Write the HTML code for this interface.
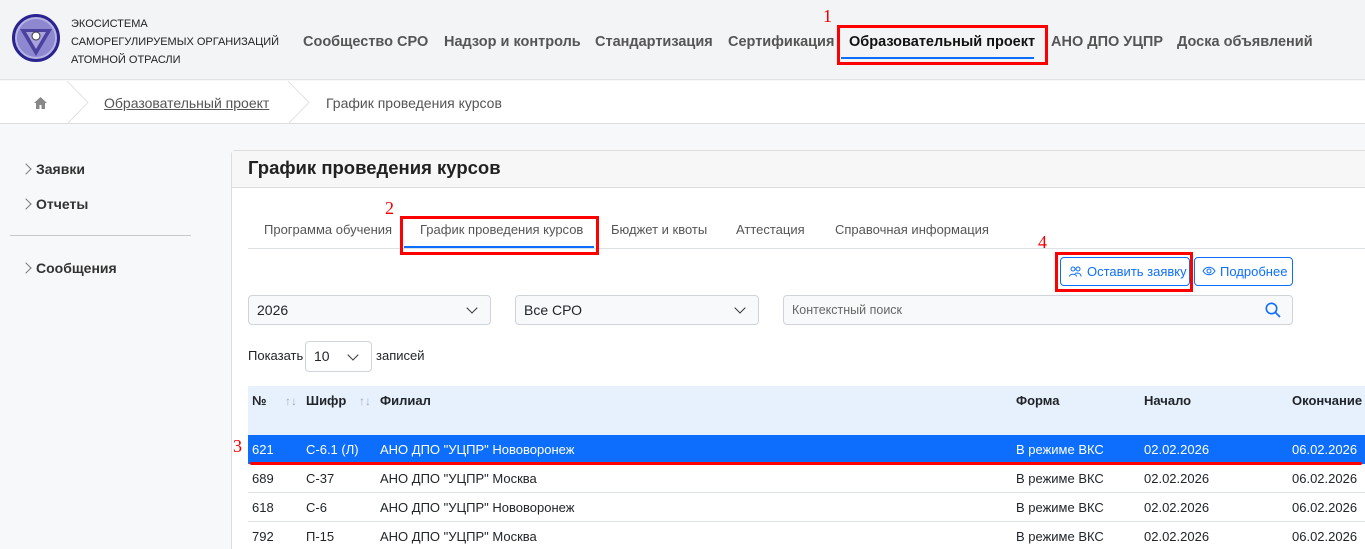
<!DOCTYPE html><html><head><meta charset="utf-8"><style>
*{margin:0;padding:0;box-sizing:border-box}
html,body{width:1365px;height:549px;overflow:hidden}
body{background:#f7f8fa;font-family:"Liberation Sans",Arial,sans-serif;position:relative;color:#212529}
.a{position:absolute;white-space:nowrap}
.nav{font-size:14.5px;font-weight:bold;color:#555;top:34px}
.red{border:3px solid #f00;position:absolute}
.num{position:absolute;color:#e00;font-family:"Liberation Serif",serif;font-size:18px}
.tab{font-size:13px;color:#555;top:222px}
.sel{position:absolute;height:30px;border:1px solid #ced4da;border-radius:4px;background:#f8f9fa;font-size:14px;padding:6px 8px}
.chev{position:absolute;right:14px;top:8px;width:8px;height:8px;border-right:1.5px solid #333;border-bottom:1.5px solid #333;transform:rotate(45deg)}
.row{position:absolute;left:248px;width:1117px;height:29px;font-size:13px;border-bottom:1px solid #dee2e6}
.row span{position:absolute;top:7px}
.side{font-size:14px;font-weight:bold;color:#333;left:36px}
.sc{position:absolute;left:22px;width:8px;height:8px;border-right:1.5px solid #777;border-top:1.5px solid #777;transform:rotate(45deg)}
</style></head><body>
<div class="a" style="left:0;top:0;width:1365px;height:80px;background:#f3f4f6;border-bottom:1px solid #e2e3e5"></div>
<svg class="a" style="left:12px;top:14px" width="48" height="48" viewBox="0 0 48 48"><circle cx="24" cy="24" r="22.5" fill="#b7b4e2" stroke="#2a2390" stroke-width="3"/><circle cx="24" cy="24" r="19" fill="#8d88cf"/><polygon points="8,15 40,15 24,42" fill="#4a429e"/><polygon points="14,18 34,18 24,35" fill="#a8a3de"/><circle cx="24" cy="22" r="4" fill="#fff" stroke="#333"/></svg>
<div class="a" style="left:71px;top:15px;font-size:11px;line-height:18px;color:#222">ЭКОСИСТЕМА<br>САМОРЕГУЛИРУЕМЫХ ОРГАНИЗАЦИЙ<br>АТОМНОЙ ОТРАСЛИ</div>
<div class="a nav" style="left:303px">Сообщество СРО</div>
<div class="a nav" style="left:444px">Надзор и контроль</div>
<div class="a nav" style="left:595px">Стандартизация</div>
<div class="a nav" style="left:728px">Сертификация</div>
<div class="a nav" style="left:849px;color:#111">Образовательный проект</div>
<div class="a" style="left:841px;top:57px;width:193px;height:2px;background:#0d6efd"></div>
<div class="red" style="left:837px;top:25px;width:211px;height:40px"></div>
<div class="num" style="left:823px;top:6px">1</div>
<div class="a nav" style="left:1051px">АНО ДПО УЦПР</div>
<div class="a nav" style="left:1177px">Доска объявлений</div>
<div class="a" style="left:0;top:81px;width:1365px;height:43px;background:#fff;border-bottom:1px solid #ddd"></div>
<svg class="a" style="left:34px;top:97px" width="13" height="12" viewBox="0 0 13 12"><path d="M6.5 0L0 6h2v6h3.5V8h2v4H11V6h2z" fill="#888"/></svg>
<svg class="a" style="left:66px;top:81px" width="24" height="43"><path d="M1 0L22 21.5L1 43" fill="none" stroke="#e3e3e3"/></svg>
<div class="a" style="left:104px;top:95px;font-size:14px;color:#555;text-decoration:underline">Образовательный проект</div>
<svg class="a" style="left:287px;top:81px" width="24" height="43"><path d="M1 0L22 21.5L1 43" fill="none" stroke="#e3e3e3"/></svg>
<div class="a" style="left:326px;top:95px;font-size:14px;color:#555">График проведения курсов</div>
<div class="sc" style="top:165px"></div><div class="a side" style="top:161px">Заявки</div>
<div class="sc" style="top:200px"></div><div class="a side" style="top:196px">Отчеты</div>
<div class="a" style="left:10px;top:235px;width:181px;height:1px;background:#c8c8c8"></div>
<div class="sc" style="top:264px"></div><div class="a side" style="top:260px">Сообщения</div>
<div class="a" style="left:231px;top:150px;width:1140px;height:420px;background:#fff;border:1px solid #ddd;border-radius:4px"></div>
<div class="a" style="left:232px;top:151px;width:1133px;height:37px;background:#f7f7f7;border-bottom:1px solid #ddd"></div>
<div class="a" style="left:248px;top:157px;font-size:18.5px;font-weight:bold;color:#222">График проведения курсов</div>
<div class="a" style="left:248px;top:248px;width:1117px;height:1px;background:#dee2e6"></div>
<div class="a tab" style="left:264px">Программа обучения</div>
<div class="a tab" style="left:420px">График проведения курсов</div>
<div class="a" style="left:404px;top:246px;width:190px;height:2px;background:#0d6efd"></div>
<div class="red" style="left:400px;top:216px;width:199px;height:39px"></div>
<div class="num" style="left:385px;top:198px">2</div>
<div class="a tab" style="left:611px">Бюджет и квоты</div>
<div class="a tab" style="left:736px">Аттестация</div>
<div class="a tab" style="left:835px">Справочная информация</div>
<div class="num" style="left:1038px;top:232px">4</div>
<div class="red" style="left:1055px;top:252px;width:138px;height:40px"></div>
<div class="a" style="left:1060px;top:257px;width:130px;height:29px;border:1px solid #0d6efd;border-radius:4px;color:#0d6efd;font-size:13px;padding:6px 0 0 26px">Оставить заявку</div>
<svg class="a" style="left:1069px;top:266px" width="13" height="11" viewBox="0 0 13 11"><g fill="none" stroke="#0d6efd" stroke-width="1"><circle cx="4" cy="3" r="2"/><circle cx="9" cy="3" r="2"/><path d="M0.5 10.5c0-3 7-3 7 0M6 7.5c2-1 6-.5 6 3"/></g></svg>
<div class="a" style="left:1194px;top:257px;width:99px;height:29px;border:1px solid #0d6efd;border-radius:4px;color:#0d6efd;font-size:13px;padding:6px 0 0 25px">Подробнее</div>
<svg class="a" style="left:1202px;top:266px" width="14" height="10" viewBox="0 0 14 10"><path d="M1 5C4 0 10 0 13 5C10 10 4 10 1 5z" fill="none" stroke="#0d6efd"/><circle cx="7" cy="5" r="2" fill="none" stroke="#0d6efd"/></svg>
<div class="sel" style="left:248px;top:295px;width:243px">2026<div class="chev"></div></div>
<div class="sel" style="left:515px;top:295px;width:244px">Все СРО<div class="chev"></div></div>
<div class="sel" style="left:783px;top:295px;width:510px;font-size:12.5px;color:#666;padding-top:7px">Контекстный поиск</div>
<svg class="a" style="left:1265px;top:302px" width="16" height="16" viewBox="0 0 16 16"><circle cx="6.5" cy="6.5" r="5.2" fill="none" stroke="#0d6efd" stroke-width="1.6"/><path d="M10.5 10.5L15 15" stroke="#0d6efd" stroke-width="1.6"/></svg>
<div class="a" style="left:248px;top:348px;font-size:13px">Показать</div>
<div class="sel" style="left:305px;top:341px;width:67px;height:31px;background:#fff">10<div class="chev" style="right:14px;top:9px"></div></div>
<div class="a" style="left:376px;top:348px;font-size:13px">записей</div>
<div class="a" style="left:248px;top:386px;width:1117px;height:49px;background:#e7f0fd"></div>
<div class="a" style="left:252px;top:393px;font-size:13px;font-weight:bold">№</div>
<div class="a" style="left:285px;top:394px;font-size:12px;color:#aab">↑↓</div>
<div class="a" style="left:306px;top:393px;font-size:13px;font-weight:bold">Шифр</div>
<div class="a" style="left:359px;top:394px;font-size:12px;color:#aab">↑↓</div>
<div class="a" style="left:380px;top:393px;font-size:13px;font-weight:bold">Филиал</div>
<div class="a" style="left:1016px;top:393px;font-size:13px;font-weight:bold">Форма</div>
<div class="a" style="left:1144px;top:393px;font-size:13px;font-weight:bold">Начало</div>
<div class="a" style="left:1292px;top:393px;font-size:13px;font-weight:bold">Окончание</div>
<div class="row" style="top:435px;background:#0d6efd;color:#fff;border:none"><span style="left:4px">621</span><span style="left:58px">С-6.1 (Л)</span><span style="left:132px">АНО ДПО "УЦПР" Нововоронеж</span><span style="left:768px">В режиме ВКС</span><span style="left:896px">02.02.2026</span><span style="left:1044px">06.02.2026</span></div>
<div class="a" style="left:250px;top:462px;width:1112px;height:3px;background:#f00;border-radius:2px"></div>
<div class="num" style="left:233px;top:436px">3</div>
<div class="row" style="top:464px"><span style="left:4px">689</span><span style="left:58px">С-37</span><span style="left:132px">АНО ДПО "УЦПР" Москва</span><span style="left:768px">В режиме ВКС</span><span style="left:896px">02.02.2026</span><span style="left:1044px">06.02.2026</span></div>
<div class="row" style="top:493px"><span style="left:4px">618</span><span style="left:58px">С-6</span><span style="left:132px">АНО ДПО "УЦПР" Нововоронеж</span><span style="left:768px">В режиме ВКС</span><span style="left:896px">02.02.2026</span><span style="left:1044px">06.02.2026</span></div>
<div class="row" style="top:522px"><span style="left:4px">792</span><span style="left:58px">П-15</span><span style="left:132px">АНО ДПО "УЦПР" Москва</span><span style="left:768px">В режиме ВКС</span><span style="left:896px">02.02.2026</span><span style="left:1044px">06.02.2026</span></div>
</body></html>
